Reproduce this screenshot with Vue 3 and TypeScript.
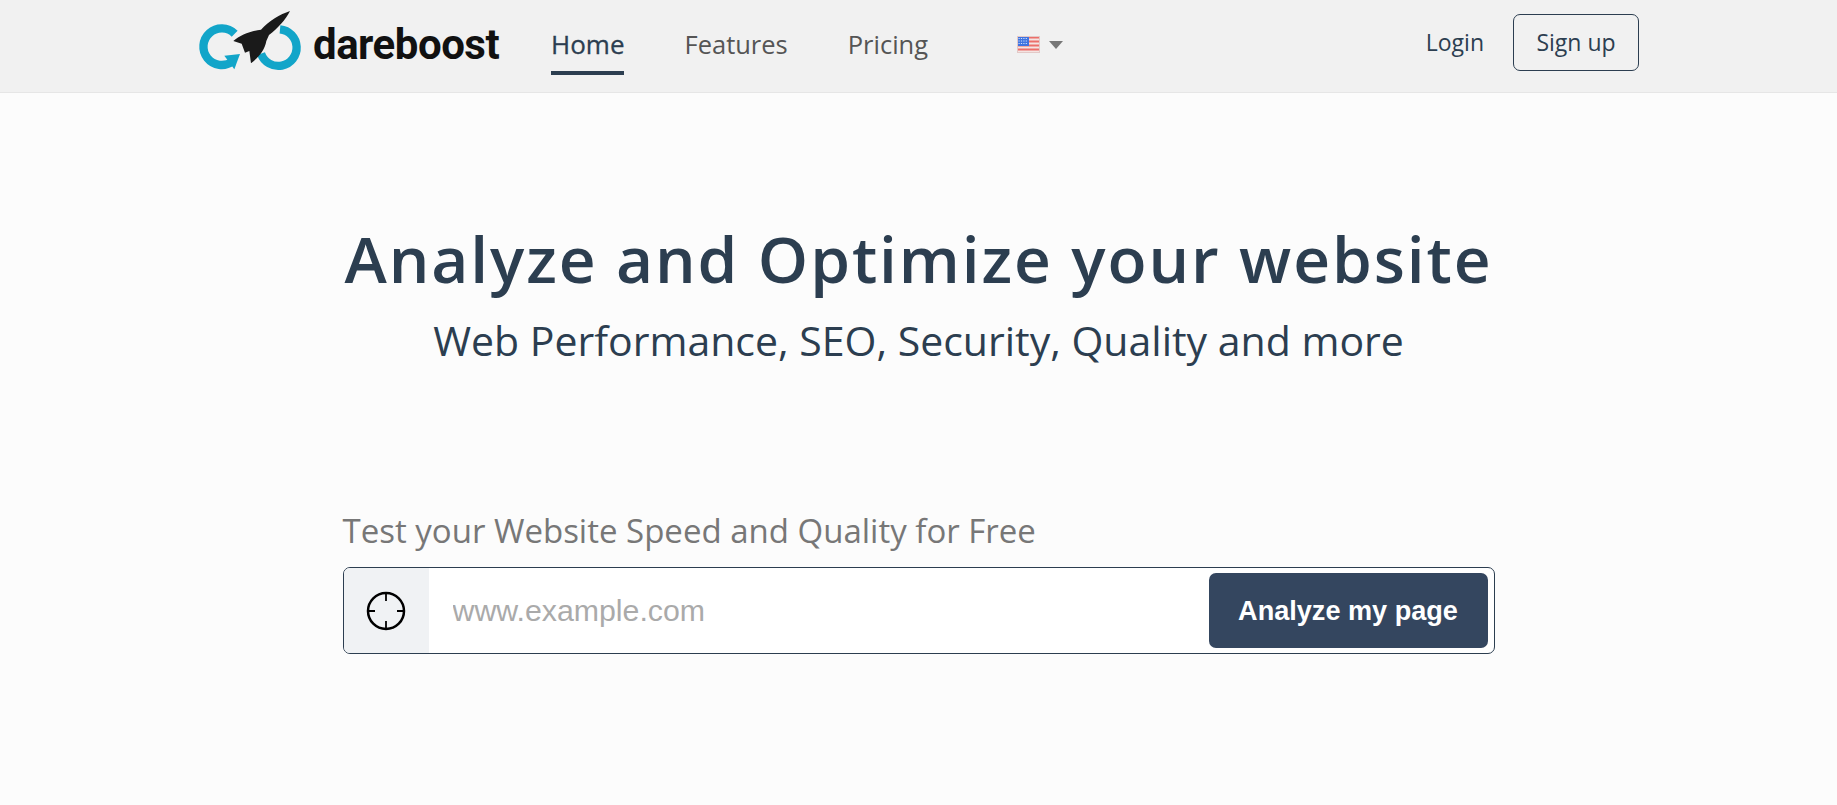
<script setup lang="ts">
interface NavLink {
  label: string;
  active?: boolean;
}

const links: NavLink[] = [
  { label: 'Home', active: true },
  { label: 'Features' },
  { label: 'Pricing' },
];
</script>

<template>
  <div class="page">
    <header class="topbar">
      <a class="brand">
        <svg class="brand-mark" viewBox="0 0 330 210" width="110" height="70" aria-hidden="true">
          <path d="M119 86 A55 55 0 1 0 112 170" fill="none" stroke="#12a5c9" stroke-width="25" />
          <path d="M88 152 L135 147 L118 193 Z" fill="#12a5c9" />
          <path d="M255 73 A55 55 0 1 1 198 146" fill="none" stroke="#12a5c9" stroke-width="25" />
          <path d="M285 18 C255 28 222 48 198 74 C168 78 135 90 115 108 L140 116 L150 143 L163 138 L168 175 C190 158 210 135 214 108 L222 90 C248 70 272 45 285 18 Z" fill="#1a1a1a" />
        </svg>
        <span class="brand-name">dareboost</span>
      </a>

      <nav class="nav">
        <a v-for="link in links" :key="link.label" class="nav-link" :class="{ active: link.active }">{{ link.label }}</a>
      </nav>

      <div class="lang">
        <svg class="flag" viewBox="0 0 23 17" width="23" height="17" aria-hidden="true">
          <rect width="23" height="17" fill="#f4e4e2" />
          <path d="M0 1.5h23M0 5.5h23M0 9.5h23M0 13.5h23" stroke="#ec6f6a" stroke-width="2" />
          <rect y="0" width="12" height="10" fill="#3f73e0" />
          <path d="M1.5 2.5h9M1.5 5h9M1.5 7.5h9" stroke="#cfe0fb" stroke-width="1" stroke-dasharray="1.2 1.2" />
          <rect x="0.5" y="0.5" width="22" height="16" fill="none" stroke="#e3c9c7" />
        </svg>
        <span class="caret"></span>
      </div>

      <div class="account">
        <a class="login">Login</a>
        <a class="signup">Sign up</a>
      </div>
    </header>

    <main class="hero">
      <h1>Analyze and Optimize your website</h1>
      <h2>Web Performance, SEO, Security, Quality and more</h2>

      <form class="test-form" @submit.prevent>
        <label class="test-label">Test your Website Speed and Quality for Free</label>
        <div class="url-group">
          <span class="url-addon">
            <svg viewBox="0 0 40 40" width="40" height="40" aria-hidden="true">
              <circle cx="20" cy="20" r="18" fill="none" stroke="#000" stroke-width="2.5" />
              <path d="M20 2v8M20 30v8M2 20h7M31 20h7" stroke="#000" stroke-width="1.8" />
            </svg>
          </span>
          <input class="url-input" type="text" placeholder="www.example.com" />
          <button class="url-submit" type="submit">Analyze my page</button>
        </div>
      </form>
    </main>
  </div>
</template>

<style>
html,
body {
  margin: 0;
  background: #fcfcfc;
}
</style>

<style scoped>
.page {
  min-height: 805px;
  background: #fcfcfc;
  font-family: "Open Sans", "Liberation Sans", sans-serif;
  color: #2c3e50;
}

.topbar {
  display: flex;
  align-items: center;
  box-sizing: border-box;
  height: 93px;
  padding: 0 198px 0 195px;
  background: #f1f1f1;
  border-bottom: 1px solid #e6e6e6;
}

.brand {
  display: flex;
  align-items: flex-start;
  gap: 8px;
  width: 305px;
  height: 70px;
  margin-top: -12px;
}

.brand-mark {
  flex: none;
}

.brand-name {
  margin-top: 19px;
  font-family: "Roboto", "Liberation Sans", sans-serif;
  font-size: 42px;
  font-weight: 700;
  letter-spacing: -0.5px;
  line-height: 1;
  color: #111;
}

.nav {
  display: flex;
  align-items: flex-start;
  gap: 60px;
  margin-left: 51px;
  align-self: stretch;
}

.nav-link {
  display: flex;
  align-items: center;
  box-sizing: border-box;
  height: 75px;
  padding-top: 17px;
  border-bottom: 4px solid transparent;
  font-size: 25.5px;
  color: #555;
}

.nav-link.active {
  font-size: 26px;
  -webkit-text-stroke: 0.3px #2c3e50;
  color: #2c3e50;
  border-bottom-color: #2c3e50;
}

.lang {
  display: flex;
  align-items: center;
  gap: 9px;
  margin-left: 89px;
  margin-top: -3px;
}

.flag {
  display: block;
}

.caret {
  width: 0;
  height: 0;
  border-left: 7px solid transparent;
  border-right: 7px solid transparent;
  border-top: 8px solid #777;
}

.account {
  display: flex;
  align-items: center;
  gap: 29px;
  margin-left: auto;
  margin-top: -8px;
}

.login {
  font-size: 23px;
  color: #2c3e50;
}

.signup {
  box-sizing: border-box;
  display: flex;
  align-items: center;
  justify-content: center;
  width: 126px;
  height: 57px;
  border: 1.5px solid #2c3e50;
  border-radius: 7px;
  font-size: 23px;
  color: #2c3e50;
}

.hero {
  display: flex;
  flex-direction: column;
  align-items: center;
  padding-top: 128px;
}

h1 {
  margin: 0;
  font-size: 64px;
  font-weight: 600;
  line-height: 76px;
  letter-spacing: 1.9px;
  color: #2c3e50;
}

h2 {
  margin: 14px 0 0;
  font-size: 41px;
  font-weight: 400;
  line-height: 58px;
  color: #2c3e50;
}

.test-form {
  width: 1152px;
  margin-top: 140px;
}

.test-label {
  display: block;
  margin-bottom: 14px;
  font-size: 33px;
  line-height: 44px;
  color: #777;
}

.url-group {
  display: flex;
  align-items: center;
  box-sizing: border-box;
  height: 87px;
  background: #fff;
  border: 1.5px solid #2c3e50;
  border-radius: 7px;
  overflow: hidden;
}

.url-addon {
  display: flex;
  align-items: center;
  justify-content: center;
  flex: none;
  width: 85px;
  align-self: stretch;
  background: #f0f2f4;
}

.url-input {
  flex: 1;
  min-width: 0;
  height: 100%;
  box-sizing: border-box;
  padding: 0 24px;
  border: 0;
  outline: 0;
  background: transparent;
  font-family: "Liberation Sans", Arial, sans-serif;
  font-size: 30.3px;
  color: #333;
}

.url-input::placeholder {
  color: #aaa;
  opacity: 1;
}

.url-submit {
  flex: none;
  width: 279px;
  height: 75px;
  margin-right: 6px;
  padding-top: 2px;
  border: 0;
  border-radius: 7px;
  background: #34465f;
  font-family: "Liberation Sans", Arial, sans-serif;
  font-size: 27.1px;
  font-weight: 700;
  color: #fff;
}
</style>
